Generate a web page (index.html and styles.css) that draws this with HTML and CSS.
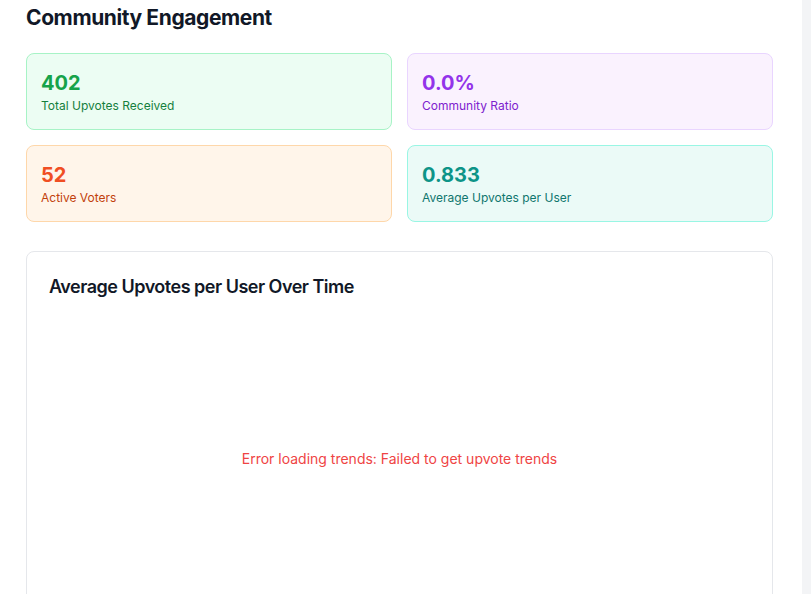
FILE: index.html
```html
<!DOCTYPE html>
<html lang="en">
<head>
<meta charset="utf-8">
<title>Community Engagement</title>
<link rel="stylesheet" href="styles.css">
</head>
<body>
<div class="layout">
  <main class="main">
    <h2 class="title">Community Engagement</h2>
    <div class="stats">
      <div class="stat stat-green">
        <div class="stat-value">402</div>
        <div class="stat-label">Total Upvotes Received</div>
      </div>
      <div class="stat stat-purple">
        <div class="stat-value">0.0%</div>
        <div class="stat-label">Community Ratio</div>
      </div>
      <div class="stat stat-orange">
        <div class="stat-value">52</div>
        <div class="stat-label">Active Voters</div>
      </div>
      <div class="stat stat-teal">
        <div class="stat-value">0.833</div>
        <div class="stat-label">Average Upvotes per User</div>
      </div>
    </div>
    <section class="chart-card">
      <h3 class="chart-title">Average Upvotes per User Over Time</h3>
      <div class="chart-area">
        <p class="chart-error">Error loading trends: Failed to get upvote trends</p>
      </div>
    </section>
  </main>
  <aside class="side"></aside>
</div>
</body>
</html>
```
FILE: styles.css
```css
* { box-sizing: border-box; }
html, body { margin: 0; padding: 0; }
body {
  font-family: Inter, "Noto Sans", sans-serif;
  background: #f3f4f6;
  color: #111827;
  overflow: hidden;
}
.layout {
  display: flex;
  min-height: 594px;
}
.main {
  width: 802px;
  background: #ffffff;
  padding: 4px 29px 0 26px;
}
.side {
  flex: 1;
  background: #f3f4f6;
}
.title {
  margin: 0 0 21px;
  font-size: 21px;
  line-height: 28px;
  font-weight: 700;
  letter-spacing: -0.4px;
  color: #111827;
}
.stats {
  display: grid;
  grid-template-columns: 1fr 1fr;
  column-gap: 15px;
  row-gap: 15px;
}
.stat {
  border: 1px solid;
  border-radius: 8px;
  padding: 15px 14px 14px;
  height: 77px;
}
.stat-value {
  font-size: 20px;
  line-height: 28px;
  font-weight: 700;
}
.stat-label {
  margin-top: 1px;
  font-size: 12px;
  line-height: 16px;
}
.stat-green { background: #ecfdf3; border-color: #a7f3c6; }
.stat-green .stat-value { color: #16a34a; }
.stat-green .stat-label { color: #15803d; }
.stat-purple { background: #faf2fe; border-color: #e9d5ff; }
.stat-purple .stat-value { color: #9333ea; }
.stat-purple .stat-label { color: #7e22ce; }
.stat-orange { background: #fff5ea; border-color: #fed7aa; }
.stat-orange .stat-value { color: #f04e23; }
.stat-orange .stat-label { color: #c2410c; }
.stat-teal { background: #ebfaf7; border-color: #99f6e4; }
.stat-teal .stat-value { color: #0d9488; }
.stat-teal .stat-label { color: #0f766e; }
.chart-card {
  margin-top: 29px;
  border: 1px solid #e5e7eb;
  border-radius: 8px;
  padding: 21px 22px 0;
  height: 360px;
}
.chart-title {
  margin: 0;
  font-size: 18px;
  line-height: 28px;
  font-weight: 600;
  letter-spacing: -0.5px;
  color: #111827;
}
.chart-area {
  margin-top: 18px;
  height: 280px;
  display: flex;
  align-items: center;
  justify-content: center;
}
.chart-error {
  margin: 0;
  font-size: 14px;
  line-height: 20px;
  color: #ef4444;
}
```
